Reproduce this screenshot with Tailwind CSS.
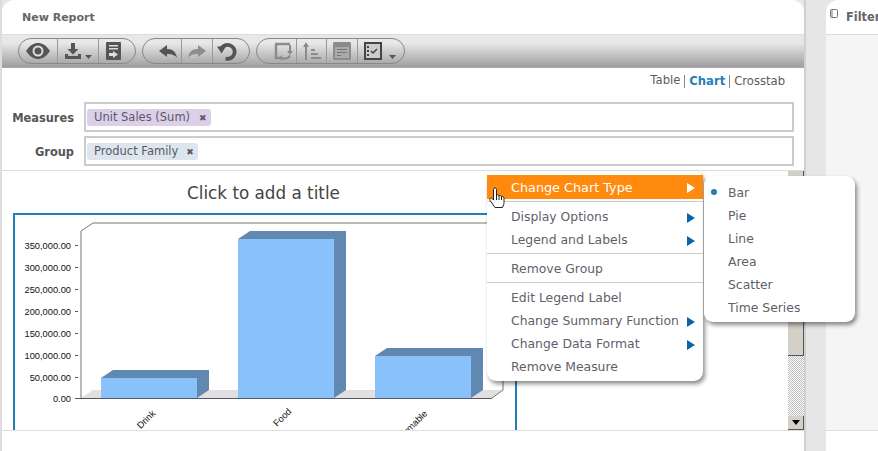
<!DOCTYPE html>
<html lang="en">
  <head>
    <meta charset="UTF-8" />
    <title>New Report</title>
    <script src="https://cdn.jsdelivr.net/npm/@tailwindcss/browser@4"></script>
  </head>
  <body class="bg-[#e6e6e6]">
    <div class="relative w-[878px] h-[451px] overflow-hidden flex bg-[#e6e6e6] font-['DejaVu_Sans',sans-serif] text-[#5a5a64]">
      <div class="w-[2px] h-full shrink-0 bg-[#ddd]"></div>
      <!-- report panel -->
      <div class="w-[802px] shrink-0 h-full flex flex-col bg-white rounded-t-xl">
        <div class="h-[34px] shrink-0 pl-[20px] flex items-center text-[11px] font-bold text-[#666] pt-[2px]">New Report</div>
        <div class="h-[34px] shrink-0 border-t border-[#ddd] pt-[3px] pl-[16px] flex gap-[6px] bg-linear-to-b from-[#e8e8e8] from-25% to-[#9f9f9f] border-b border-b-[#aaa]">
          <div class="h-[26px] w-[118px] flex rounded-full border border-[#888]">
            <div class="w-[39px] flex items-center justify-center border-r border-[#999]">
              <svg width="24" height="16" viewBox="0 0 24 16"><path d="M0 8C4 2 8 0 12 0s8 2 12 8c-4 6-8 8-12 8S4 14 0 8z" fill="#555"/><circle cx="12" cy="8" r="5.5" fill="#ddd"/><circle cx="12" cy="8" r="3.5" fill="#555"/></svg>
            </div>
            <div class="w-[41px] flex items-center pl-[7px] gap-[4px] border-r border-[#999]">
              <svg width="16" height="16" viewBox="0 0 16 16"><path d="M6 0h4v6h3.500L8 11.500 2.500 6H6zM0 11h3v2h10v-2h3v5H0z" fill="#555"/></svg>
              <svg class="mt-[11px]" width="7" height="4" viewBox="0 0 7 4"><path d="M0 0h7L3.500 4z" fill="#555"/></svg>
            </div>
            <div class="flex-1 flex items-center pl-[7px]">
              <svg width="15" height="18" viewBox="0 0 15 18"><path d="M1 0h13a1 1 0 0 1 1 1v16a1 1 0 0 1-1 1H1a1 1 0 0 1-1-1V1a1 1 0 0 1 1-1z" fill="#555"/><path d="M3 3h9v1.500H3zM3 6h9v1.500H3zM3 11h4V9l5 3.500L7 16v-2H3z" fill="#ddd"/></svg>
            </div>
          </div>
          <div class="h-[26px] w-[108px] flex rounded-full border border-[#888]">
            <div class="w-[39px] flex items-center justify-end pr-[4px] border-r border-[#999]">
              <svg width="18" height="13" viewBox="0 0 18 13"><path d="M0 6l8-6v4c6 0 9 3 10 9-2-3-5-4-10-4v3z" fill="#555"/></svg>
            </div>
            <div class="w-[31px] flex items-center justify-center border-r border-[#999]">
              <svg width="18" height="13" viewBox="0 0 18 13"><path d="M18 6l-8-6v4C4 4 1 7 0 13c2-3 5-4 10-4v3z" fill="#8d8d8d"/></svg>
            </div>
            <div class="flex-1 flex items-center pl-[4px]">
              <svg width="20" height="20" viewBox="0 0 20 20"><path d="M4 8.500a7 7 0 1 1 4.500 9" fill="none" stroke="#555" stroke-width="3.800"/><path d="M0 5.500h9L4.500 12.500z" fill="#555"/></svg>
            </div>
          </div>
          <div class="h-[26px] w-[149px] flex rounded-full border border-[#888]">
            <div class="w-[40px] flex items-center justify-end pr-[3px] border-r border-[#999]">
              <svg width="20" height="19" viewBox="0 0 20 19"><path d="M2 2h15M3 2v14h4" fill="none" stroke="#8b8b8b" stroke-width="2.500"/><path d="M17 3v8" stroke="#8b8b8b" stroke-width="2"/><path d="M14 9h6l-3 4zM9 15c3 1 6 .5 7-2l2 1c-1 3-5 4.500-9 3.500V19l-3-3 3-3z" fill="#8b8b8b"/></svg>
            </div>
            <div class="w-[30px] flex items-center justify-center border-r border-[#999]">
              <svg width="18" height="18" viewBox="0 0 18 18"><path d="M3 0l3 5H4v13H2V5H0z" fill="#8b8b8b"/><path d="M8 7h4v2H8zM8 11h7v2H8zM8 15h10v2H8z" fill="#8b8b8b"/></svg>
            </div>
            <div class="w-[31px] flex items-center justify-center border-r border-[#999]">
              <svg width="18" height="18" viewBox="0 0 18 18"><rect width="18" height="18" rx="1" fill="#8b8b8b"/><rect x="2" y="5" width="14" height="11" fill="#aaa"/><path d="M4 7h10v1H4zM4 10h10v1H4zM4 13h4v1H4z" fill="#777"/></svg>
            </div>
            <div class="flex-1 flex items-center pl-[6px] gap-[7px]">
              <svg width="18" height="18" viewBox="0 0 18 18"><rect x="1" y="1" width="16" height="16" fill="#ccc" stroke="#444" stroke-width="2"/><path d="M3 4h2v2H3zM3 8h2v2H3zM3 12h2v2H3z" fill="#444"/><path d="M7 9l2 2 4-4" fill="none" stroke="#444" stroke-width="1.500"/></svg>
              <svg class="mt-[11px]" width="7" height="4" viewBox="0 0 7 4"><path d="M0 0h7L3.500 4z" fill="#555"/></svg>
            </div>
          </div>
        </div>
        <div class="h-[34px] shrink-0 flex justify-end items-center pr-[19px] text-[11.6px] pb-[8px]">
          <span>Table</span>
          <span class="ml-[4px] pl-[4px] border-l border-[#888] leading-[13px] font-bold text-[#1f7fb8]">Chart</span>
          <span class="ml-[4px] pl-[4px] border-l border-[#888] leading-[13px]">Crosstab</span>
        </div>
        <div class="shrink-0 h-[68px] flex flex-col gap-[4px] pr-[10px] pl-[2px]">
          <div class="flex items-center gap-[10px]">
            <div class="w-[70px] text-right text-[11.4px] font-bold text-[#555] pt-[3px]">Measures</div>
            <div class="flex-1 h-[30px] border-2 border-[#ccc] pl-[1px] flex items-center">
              <div class="h-[17px] w-[124px] rounded-[3px] bg-[#dccfea] pl-[7px] pt-[2px] flex items-center gap-[9px] text-[11.5px]"><span>Unit Sales (Sum)</span><span class="text-[9px] font-bold leading-none">✖</span></div>
            </div>
          </div>
          <div class="flex items-center gap-[10px]">
            <div class="w-[70px] text-right text-[11.4px] font-bold text-[#555] pt-[3px]">Group</div>
            <div class="flex-1 h-[30px] border-2 border-[#ccc] pl-[1px] flex items-center">
              <div class="h-[17px] w-[111px] rounded-[3px] bg-[#dde5ee] pl-[7px] pt-[2px] flex items-center gap-[8px] text-[11.5px]"><span>Product Family</span><span class="text-[9px] font-bold leading-none">✖</span></div>
            </div>
          </div>
        </div>
        <div class="h-[261px] shrink-0 border-t border-b border-[#ddd] flex overflow-hidden">
          <div class="flex-1 min-w-0 flex flex-col pl-[11px]">
            <div class="h-[42px] shrink-0 w-[501px] flex items-center justify-center text-[16.8px] text-[#444] pt-[3px]">Click to add a title</div>
            <div class="w-[504px] h-[240px] shrink-0 border-2 border-[#1f7fb8]">
              <!-- chart drawing: coordinates offset from the blue frame -->
              <svg width="500" height="236" viewBox="15 215 500 236" font-family="Liberation Sans" font-size="9.300" fill="#111">
                <path d="M81 398L93 390H503L492 398z" fill="#e0e0e0"/>
                <path d="M81 398V231L93 223H503V390L492 398" fill="none" stroke="#777"/>
                <path d="M75 245.500h3M75 267.500h3M75 289.500h3M75 311.500h3M75 333.500h3M75 355.500h3M75 377.500h3M75 398.500h6" stroke="#555"/>
                <g text-anchor="end">
                  <text x="71" y="249">350,000.00</text>
                  <text x="71" y="271">300,000.00</text>
                  <text x="71" y="293">250,000.00</text>
                  <text x="71" y="315">200,000.00</text>
                  <text x="71" y="337">150,000.00</text>
                  <text x="71" y="359">100,000.00</text>
                  <text x="71" y="381">50,000.00</text>
                  <text x="71" y="402">0.00</text>
                </g>
                <path d="M101 378L113 370H209V390L197 398V378z" fill="#6088b0"/>
                <rect x="101" y="378" width="96" height="20" fill="#89c1fb"/>
                <path d="M238 239L250 231H346V390L334 398V239z" fill="#6088b0"/>
                <rect x="238" y="239" width="96" height="159" fill="#89c1fb"/>
                <path d="M375 356L387 348H483V390L471 398V356z" fill="#6088b0"/>
                <rect x="375" y="356" width="96" height="42" fill="#89c1fb"/>
                <path d="M81 398.500H492" stroke="#556" />
                <g text-anchor="end">
                  <text transform="translate(156 414) rotate(-45)">Drink</text>
                  <text transform="translate(292 412) rotate(-45)">Food</text>
                  <text transform="translate(428 414) rotate(-45)">Non-Consumable</text>
                </g>
              </svg>
            </div>
          </div>
          <!-- scrollbar -->
          <div class="w-[16px] shrink-0 flex flex-col bg-[repeating-conic-gradient(#bdbdbd_0_25%,#fff_0_50%)] bg-size-[2px_2px]">
            <div class="h-[185px] bg-[#d4d0c8] border-r border-b border-[#555]"></div>
            <div class="flex-1"></div>
            <div class="h-[14px] bg-[#d4d0c8] border-r border-b border-[#555] flex items-center justify-center">
              <svg width="8" height="5" viewBox="0 0 8 5"><path d="M0 0h8L4 5z" fill="#000"/></svg>
            </div>
          </div>
        </div>
        <div class="flex-1"></div>
      </div>
      <div class="w-[2px] h-full shrink-0 bg-[#d0d0d0]"></div>
      <div class="w-[20px] shrink-0"></div>
      <!-- filters panel -->
      <div class="flex-1 h-full flex flex-col rounded-tl-xl bg-white">
        <div class="h-[35px] shrink-0 flex items-center pl-[4px] gap-[8px] border-b border-[#ddd] text-[11.4px] font-bold text-[#666] pt-[2px]">
          <svg class="mb-[9px]" width="8" height="9" viewBox="0 0 8 9"><rect x=".5" y=".5" width="7" height="8" rx="1" fill="#fff" stroke="#777"/><path d="M1 1h2v7H1z" fill="#bbb"/></svg>
          <span>Filters</span>
        </div>
        <div class="h-[396px] shrink-0 bg-[#f5f5f5] border-b border-[#ddd]"></div>
        <div class="flex-1"></div>
      </div>

      <!-- context menu -->
      <div class="absolute left-[487px] top-[171px] w-[216px] h-[210px] pt-[4px] bg-white rounded-[9px] shadow-[2px_3px_4px_rgba(0,0,0,0.45)] text-[12.4px] text-[#5f5f6b]">
        <div class="h-[24px] pt-[2px] bg-[#ff8a0d] text-white text-[12.8px] flex items-center justify-between pl-[24px] pr-[8px]"><span>Change Chart Type</span><svg width="8" height="10" viewBox="0 0 8 10"><path d="M0 0l8 5-8 5z" fill="#fff"/></svg></div>
        <div class="mt-[2px] pt-[3px] border-t border-[#ccc]">
          <div class="h-[23px] pt-[2px] flex items-center justify-between pl-[24px] pr-[8px]"><span>Display Options</span><svg width="8" height="10" viewBox="0 0 8 10"><path d="M0 0l8 5-8 5z" fill="#0a65a8"/></svg></div>
          <div class="h-[23px] pt-[2px] flex items-center justify-between pl-[24px] pr-[8px]"><span>Legend and Labels</span><svg width="8" height="10" viewBox="0 0 8 10"><path d="M0 0l8 5-8 5z" fill="#0a65a8"/></svg></div>
        </div>
        <div class="mt-[2px] pt-[3px] pb-[2px] border-t border-[#ccc]">
          <div class="h-[23px] pt-[2px] flex items-center pl-[24px]">Remove Group</div>
        </div>
        <div class="pt-[3px] border-t border-[#ccc]">
          <div class="h-[23px] pt-[2px] flex items-center pl-[24px]">Edit Legend Label</div>
          <div class="h-[23px] pt-[2px] flex items-center justify-between pl-[24px] pr-[8px]"><span>Change Summary Function</span><svg width="8" height="10" viewBox="0 0 8 10"><path d="M0 0l8 5-8 5z" fill="#0a65a8"/></svg></div>
          <div class="h-[23px] pt-[2px] flex items-center justify-between pl-[24px] pr-[8px]"><span>Change Data Format</span><svg width="8" height="10" viewBox="0 0 8 10"><path d="M0 0l8 5-8 5z" fill="#0a65a8"/></svg></div>
          <div class="h-[23px] pt-[2px] flex items-center pl-[24px]">Remove Measure</div>
        </div>
      </div>

      <!-- chart type submenu -->
      <div class="absolute left-[704px] top-[176px] w-[151px] h-[146px] pt-[6px] bg-white rounded-[9px] shadow-[2px_3px_4px_rgba(0,0,0,0.45)] text-[12.4px] text-[#5f5f6b]">
        <div class="relative h-[23px] flex items-center pl-[24px]"><span class="absolute left-[7px] top-[7px] w-[6px] h-[6px] rounded-full bg-[#1f7fb8]"></span>Bar</div>
        <div class="h-[23px] flex items-center pl-[24px]">Pie</div>
        <div class="h-[23px] flex items-center pl-[24px]">Line</div>
        <div class="h-[23px] flex items-center pl-[24px]">Area</div>
        <div class="h-[23px] flex items-center pl-[24px]">Scatter</div>
        <div class="h-[23px] flex items-center pl-[24px]">Time Series</div>
      </div>

      <!-- pointer -->
      <svg class="absolute left-[489px] top-[187px]" width="16" height="22" viewBox="0 0 16 22"><path d="M5 1.500c1-1 2.500-.5 2.500 1V8c1-.5 2 0 2.500.8 1-.5 2 0 2.500.8 1-.3 2.500.2 2.500 1.700v4c0 2-.5 3-1.500 5.200H6L1.500 14c-1-1.200-1-2.200-.2-2.700.8-.5 1.700 0 3.200 1.700V3c0-.5.200-1 .5-1.500z" fill="#fff" stroke="#222"/><path d="M7.500 8v5M10 8.500V13M12.500 9.300V13" stroke="#222" fill="none"/></svg>
    </div>
  </body>
</html>
